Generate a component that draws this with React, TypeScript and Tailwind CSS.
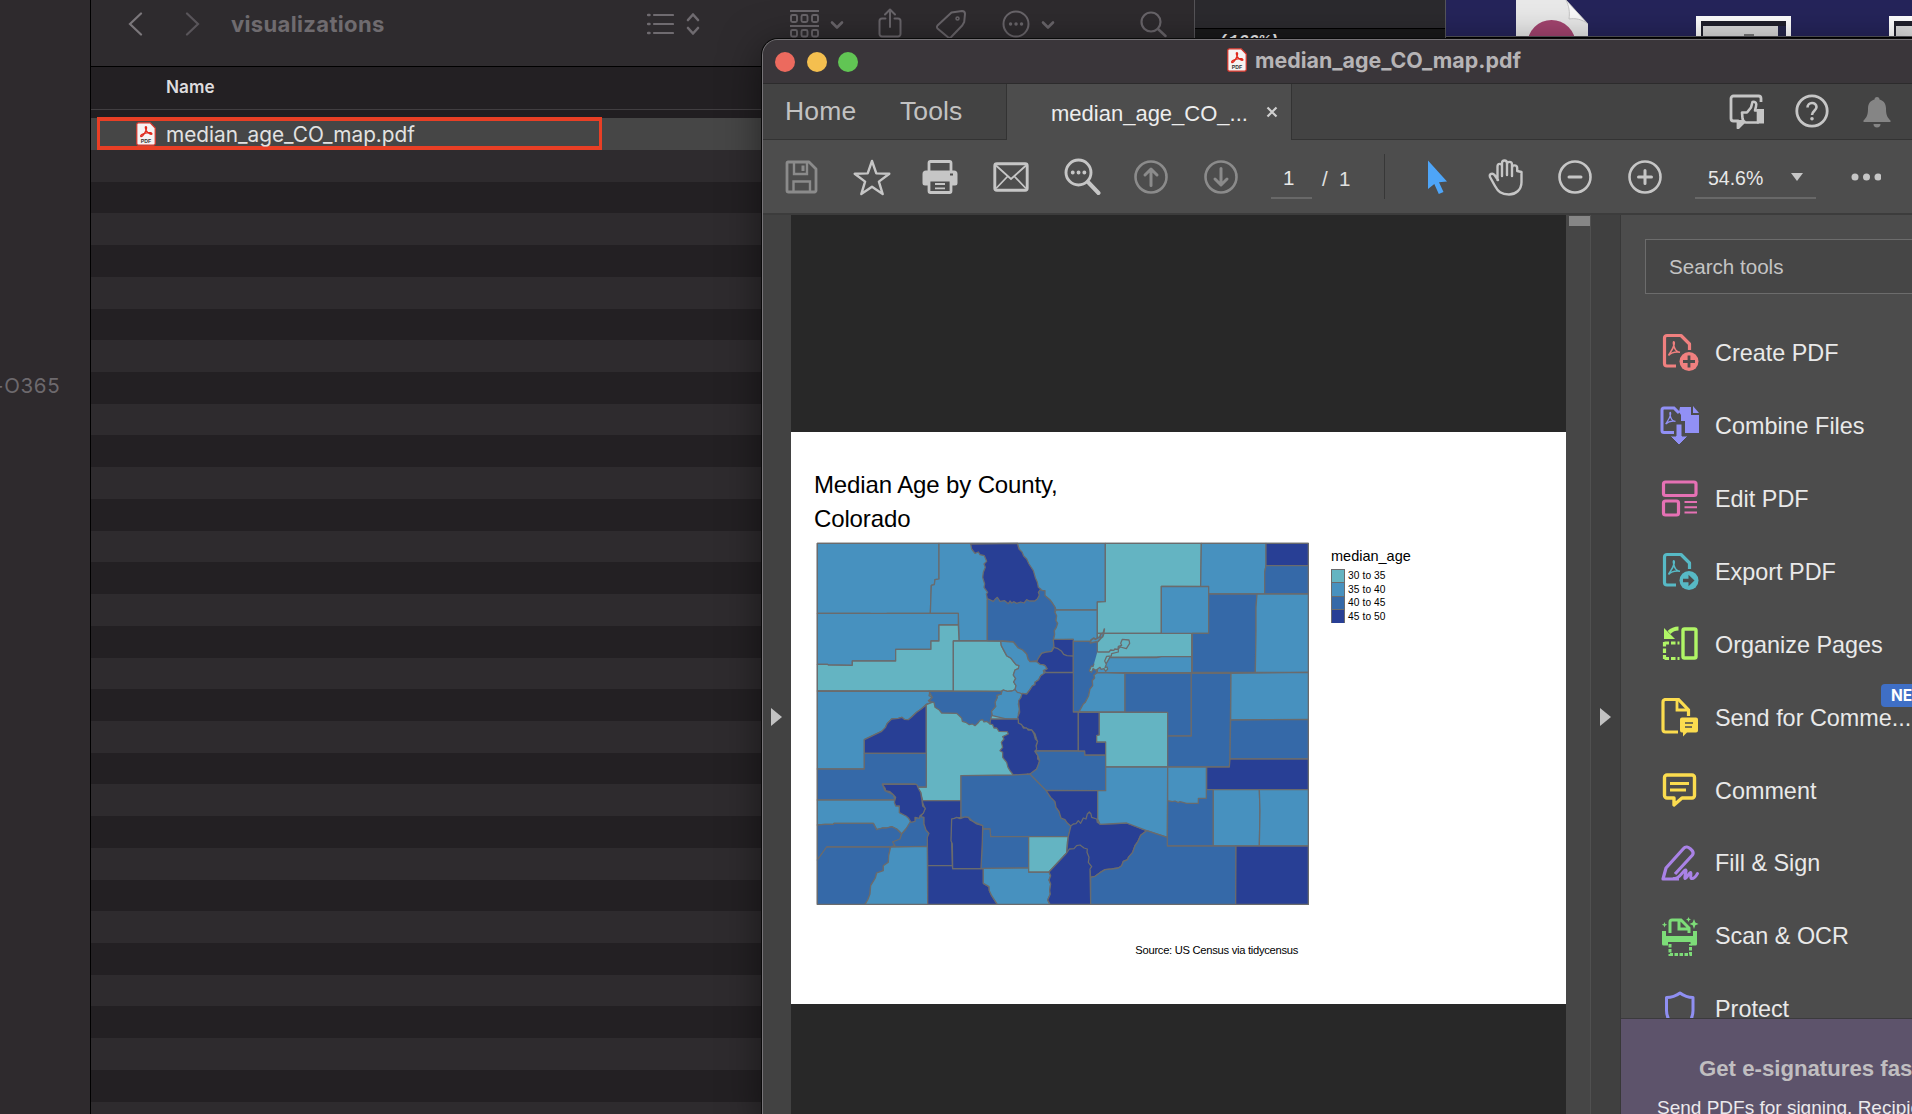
import React from "react";

const A = "#64b4c2";
const B = "#4791bf";
const C = "#3569a8";
const D = "#283f95";

const counties: [string, string, string][] = [
  ["Moffat", B, "52,308 417,308 417,415 405,417 403,432 394,434 391,518 262,518 255,520 215,520 210,518 52,518"],
  ["Routt", B, "417,308 652,308 562,478 562,600 477,600 475,518 391,518 394,434 403,432 405,417 417,415"],
  ["Rio Blanco", B, "52,518 475,518 475,553 417,553 417,601 393,601 393,626 287,626 287,661 157,661 157,674 85,673 83,671 52,671"],
  ["Garfield", A, "52,671 83,671 85,673 157,674 157,661 287,661 287,626 393,626 393,601 417,601 417,553 475,553 477,600 460,601 460,751 52,751"],
  ["Larimer", B, "652,308 916,308 916,483 892,484 892,508 768,508 765,500 750,478 735,465 700,470"],
  ["Eagle", A, "460,601 602,601 604,615 613,632 620,645 633,653 640,662 648,672 657,675 655,684 645,688 640,703 647,714 641,724 648,735 645,747 636,751 622,752 610,748 604,752 460,751"],
  ["Grand", C, "562,470 722,447 728,450 735,450 735,465 750,478 757,487 765,500 765,515 770,525 768,540 773,548 769,560 763,570 764,582 760,598 762,615 755,632 735,635 725,638 720,645 712,660 690,663 684,655 680,640 668,628 655,622 640,604 602,601 562,600"],
  ["Jackson", D, "512,310 652,308 657,325 666,334 671,346 680,355 687,370 700,390 706,411 712,425 715,440 722,445 715,455 718,463 712,475 704,481 688,481 680,477 672,487 662,484 650,488 641,483 635,487 630,481 625,489 614,480 600,482 592,470 587,474 580,482 562,474 559,460 563,455 552,440 554,430 548,410 550,395 556,380 552,370 560,362 553,345 540,342 535,334 525,338 515,325"],
  ["Boulder", B, "768,508 892,508 892,602 820,602 820,596 760,598 764,582 763,570 769,560 773,548 768,540 770,525 765,515"],
  ["Clear Creek", D, "760,596 820,596 820,695 738,695 730,690 741,684 735,675 728,672 720,671 710,665 714,655 725,638 735,635 755,632 762,620"],
  ["Summit", B, "602,601 640,604 655,622 668,628 680,640 684,655 690,663 710,663 720,671 728,672 735,675 741,684 730,690 733,700 722,705 716,717 705,725 705,732 697,736 690,747 680,760 666,760 650,755 645,747 648,735 641,724 647,714 640,703 645,688 655,684 657,675 648,672 640,662 633,653 620,645 604,615"],
  ["Jefferson", C, "820,602 892,602 895,640 892,680 888,700 882,703 884,712 877,720 878,735 870,745 866,765 856,785 850,790 837,814 820,814"],
  ["Lake", B, "605,752 610,748 622,752 636,751 645,747 652,755 660,757 666,760 662,775 655,790 659,805 655,820 657,835 572,835 576,822 574,812 587,797 585,785 592,770 590,764 604,760"],
  ["Park", D, "735,696 820,696 820,814 835,814 835,931 705,931 712,902 705,880 695,868 675,862 655,847 653,830 659,815 656,780 663,770 666,758 680,760 690,747 697,736 705,732 705,725 716,717 722,705"],
  ["Mesa", B, "52,751 390,752 387,765 397,770 385,780 397,785 380,790 365,804 350,815 335,829 325,837 313,836 305,830 295,833 275,835 262,848 256,861 245,872 193,897 193,985 52,985"],
  ["Delta", D, "193,897 245,872 256,861 262,848 275,835 295,833 305,830 313,836 325,837 335,829 350,815 365,804 379,792 379,938 193,938"],
  ["Gunnison", A, "379,792 402,783 640,840 640,1004 483,1005 483,1080 368,1080 362,1055 352,1039 379,1039"],
  ["Pitkin", C, "387,752 605,752 604,760 590,764 592,770 585,785 587,797 574,812 576,822 572,835 570,850 560,842 552,844 548,837 540,839 533,848 525,855 517,850 508,852 497,845 487,842 485,832 470,818 425,817 418,808 405,800 402,785 387,782 397,770"],
  ["Chaffee", D, "572,835 655,835 655,847 665,852 670,862 680,862 684,868 695,868 702,880 706,895 713,902 708,915 710,925 705,933 713,944 713,955 719,960 715,975 710,985 700,993 690,1003 683,1000 676,1004 660,1005 640,1003 630,990 624,980 620,965 608,950 608,935 600,930 608,920 604,905 612,895 608,888 625,880 622,873 597,872 590,862 582,862 578,852 570,850"],
  ["Montrose", C, "52,985 193,985 193,938 379,938 379,1039 352,1039 345,1030 247,1030 255,1050 280,1062 285,1078 52,1078"],
  ["San Miguel", B, "52,1078 285,1078 298,1098 325,1120 345,1135 335,1148 318,1165 305,1180 296,1170 290,1165 275,1158 260,1162 247,1162 230,1167 220,1148 102,1148 100,1151 75,1151 52,1153"],
  ["Dolores", C, "52,1153 75,1151 100,1151 102,1148 220,1148 230,1167 247,1162 260,1162 275,1158 290,1165 305,1180 300,1195 290,1200 278,1204 285,1215 272,1219 80,1219 52,1258"],
  ["San Juan", C, "330,1145 345,1138 352,1128 362,1120 372,1130 372,1150 378,1168 387,1178 384,1190 382,1217 272,1219 285,1215 278,1204 300,1195 305,1180 318,1165"],
  ["Hinsdale", D, "366,1080 483,1080 483,1130 455,1135 455,1205 457,1276 383,1275 382,1190 387,1178 378,1168 372,1150 372,1130 362,1128 368,1118 375,1105"],
  ["Ouray", D, "247,1031 350,1031 356,1045 362,1055 366,1080 368,1096 376,1103 370,1118 360,1125 358,1133 345,1130 345,1142 333,1145 326,1133 318,1126 298,1116 298,1096 287,1096 283,1085 287,1070 280,1062 270,1053 257,1050 255,1042"],
  ["Montezuma", C, "52,1258 80,1219 272,1219 266,1245 265,1265 250,1275 250,1290 230,1297 226,1312 212,1335 210,1360 203,1378 195,1391 52,1391"],
  ["La Plata", B, "272,1219 382,1217 383,1391 195,1391 203,1378 210,1360 212,1335 226,1312 230,1297 250,1290 250,1275 265,1265 266,1245"],
  ["Archuleta", D, "383,1275 457,1275 458,1284 550,1284 550,1328 567,1338 568,1350 575,1365 592,1391 383,1391"],
  ["Saguache", C, "483,1005 640,1003 690,1000 738,1048 752,1070 765,1083 768,1100 777,1112 783,1132 795,1137 802,1147 813,1155 805,1188 572,1188 570,1165 548,1165 548,1155 520,1143 505,1130 483,1130"],
  ["Rio Grande", C, "548,1165 570,1165 572,1188 686,1188 686,1282 543,1284 547,1200"],
  ["Mineral", D, "455,1135 463,1133 470,1130 480,1134 495,1129 505,1130 510,1138 520,1143 530,1150 548,1155 547,1200 543,1284 458,1284 457,1210 453,1200"],
  ["Conejos", B, "550,1283 686,1282 686,1294 747,1294 752,1305 747,1318 752,1330 749,1350 751,1360 743,1378 750,1391 592,1391 575,1365 568,1350 567,1338 550,1328"],
  ["Alamosa", A, "686,1188 805,1188 802,1205 800,1237 747,1294 686,1294"],
  ["Fremont", C, "705,931 854,931 854,943 917,943 917,1050 738,1049 690,1000 710,985 719,960 713,944"],
  ["Custer", D, "738,1049 893,1050 893,1140 868,1160 813,1157 802,1147 795,1137 783,1132 777,1112 768,1100 765,1083 752,1070"],
  ["Huerfano", D, "813,1155 820,1150 828,1149 835,1140 842,1148 850,1132 858,1135 862,1120 868,1114 873,1120 875,1130 890,1135 892,1145 900,1150 980,1147 1040,1170 1022,1184 1014,1202 1005,1215 998,1235 985,1250 983,1257 970,1262 965,1275 955,1282 935,1285 915,1287 900,1296 885,1307 872,1310 870,1290 800,1237 805,1188"],
  ["Costilla", D, "747,1294 800,1237 808,1225 822,1224 830,1215 840,1213 852,1222 862,1225 861,1235 867,1250 865,1265 875,1278 870,1285 872,1391 750,1391 743,1378 751,1360 749,1350 752,1330 747,1318 752,1305"],
  ["Weld", A, "916,308 1204,308 1202,437 1084,437 1084,578 892,578 892,484 916,483"],
  ["Adams", A, "892,578 1175,578 1175,648 930,650 920,672 892,680"],
  ["Arapahoe", B, "892,680 915,675 930,650 1070,651 1085,648 1175,648 1175,696 892,696"],
  ["Douglas", B, "892,696 975,698 975,814 837,814 850,790 856,785 866,765 870,745 878,735 877,720 884,712 882,703"],
  ["Teller", D, "835,814 898,815 898,883 890,885 890,904 917,904 917,943 855,943 854,931 835,931"],
  ["El Paso", A, "898,815 1103,815 1103,979 917,979 917,904 890,904 890,885 898,883"],
  ["Morgan", B, "1084,437 1226,438 1226,578 1084,578"],
  ["Logan", B, "1204,308 1398,308 1398,375 1394,395 1394,460 1226,460 1226,437 1202,437"],
  ["Sedgwick", D, "1398,308 1525,308 1525,375 1398,375"],
  ["Phillips", C, "1398,375 1525,375 1525,460 1394,460 1394,395"],
  ["Washington", C, "1226,460 1371,460 1368,500 1368,570 1366,695 1177,695 1177,578 1226,578"],
  ["Yuma", B, "1371,460 1525,460 1525,695 1366,695 1368,570 1368,500"],
  ["Elbert", C, "975,698 1174,698 1174,886 1103,886 1103,815 975,814"],
  ["Lincoln", C, "1174,698 1293,698 1291,840 1290,955 1288,979 1103,979 1103,886 1174,886"],
  ["Kit Carson", B, "1293,698 1525,695 1525,836 1292,838"],
  ["Cheyenne", C, "1292,838 1525,836 1525,954 1290,955"],
  ["Kiowa", D, "1290,955 1525,955 1525,1047 1220,1047 1220,979 1288,979"],
  ["Pueblo", B, "917,979 1103,979 1102,1190 1040,1170 980,1147 900,1151 893,1135 893,1050 917,1050"],
  ["Otero", C, "1103,1080 1219,1047 1240,1047 1240,1216 1102,1216"],
  ["Crowley", B, "1103,979 1219,979 1219,1073 1195,1073 1195,1088 1160,1088 1140,1083 1135,1086 1125,1081 1117,1083 1103,1080"],
  ["Bent", B, "1240,1047 1378,1047 1380,1110 1378,1216 1240,1216"],
  ["Prowers", B, "1378,1047 1525,1047 1525,1216 1378,1216 1380,1110"],
  ["Las Animas", C, "1040,1170 1102,1190 1102,1216 1308,1216 1307,1391 872,1391 872,1310 885,1307 900,1296 915,1287 935,1285 955,1282 965,1275 970,1262 983,1257 985,1250 998,1235 1005,1215 1014,1202 1022,1184"],
  ["Baca", D, "1308,1216 1525,1216 1525,1391 1307,1391"],
];

const CountyMap = () => (
  <svg className="block h-[364px] w-[494px]" viewBox="48 304 1482 1092">
    <g stroke="#6a6b6d" strokeWidth="3.8" strokeLinejoin="round">
      <rect x="52" y="308" width="1473" height="1083" fill={B} />
      {counties.map(([name, fill, points]) => (
        <polygon key={name} fill={fill} points={points} />
      ))}
      <g fill="none">
        <path d="M762 620l12 4 11 8 6 9 10 4 19 1" />
        <path fill={B} strokeWidth="5" d="M913 565l-3 12-8 3-2 8-14 8-4-4-9 6-2 9 14-3 10-2 8-10 5-4 3-9z" />
        <path fill={A} d="M892 634h35l5-6 10 1 2-4 10 1 1-9 10-3-3-6 5-12 20 2 2 10-10 16-18-5-6 5v10l-20 5-1 7-14 1-6 14 5 10-4 10 6-2 2 6-6 7-5-8-9 2-3-6-12 9-9-5-4 11-7-4 6-15 5 2 3-9" />
      </g>
    </g>
  </svg>
);

const PdfFileIcon = ({ className }: { className: string }) => (
  <svg className={className} viewBox="0 0 20 24">
    <path d="M2.5.8h11.7L19.2 6v15.5a1.7 1.7 0 0 1-1.7 1.7h-15a1.7 1.7 0 0 1-1.7-1.7v-19A1.7 1.7 0 0 1 2.5.8z" fill="#f6f3f3" stroke="#d8362b" strokeWidth="1.2" />
    <path d="M4.7 14.2c-.8-1 3-3 6-3.4 3-.5 5.500 0 5.200 1.100-.5 1.200-4-.5-5.600-3.300C9.200 6.500 9 4.500 10 4.600c1.300.2.200 4-1.500 6.700-1.300 2.200-3 3.800-3.800 2.900z" fill="none" stroke="#e0291d" strokeWidth="1.300" />
    <text x="10" y="21" fontSize="5.200" fontWeight="700" textAnchor="middle" fill="#333" className="font-['Liberation_Sans']">PDF</text>
  </svg>
);

const S = ({ w, h, className = "", children }: { w: number; h: number; className?: string; children: React.ReactNode }) => (
  <svg width={w} height={h} viewBox={`0 0 ${w} ${h}`} fill="none" stroke="currentColor" className={`shrink-0 ${className}`}>
    {children}
  </svg>
);

const FinderToolbar = () => (
  <div className="flex h-[66px] shrink-0 items-start text-[#69656a]">
    <S w={16} h={24} className="mt-3 ml-[36px] text-[#7b777b]"><path d="M14 1.500L3 12l11 10.500" strokeWidth="2.200" strokeLinecap="round" /></S>
    <S w={16} h={24} className="mt-3 ml-[42px] text-[#59555a]"><path d="M2 1.500L13 12 2 22.500" strokeWidth="2.200" strokeLinecap="round" /></S>
    <div className="mt-[8px] ml-[30px] w-[416px] font-[Inter] text-[22px] leading-[32px] font-bold tracking-[0.35px] text-[#6f6b6f]">visualizations</div>
    <S w={27} h={22} className="mt-[13px] text-[#6f6b70]">
      <path d="M7 2h19M7 11h19M7 20h19" strokeWidth="2.200" strokeLinecap="round" />
      <path d="M1 2h1.500M1 11h1.500M1 20h1.500" strokeWidth="2.500" strokeLinecap="round" />
    </S>
    <S w={14} h={24} className="mt-3 ml-[12px] text-[#6f6b70]"><path d="M2 8l5-5.500L12 8M2 16l5 5.500 5-5.500" strokeWidth="2.600" strokeLinecap="round" strokeLinejoin="round" /></S>
    <S w={31} h={29} className="mt-[9px] ml-[89px]">
      <path d="M1 2h29M1 17h29" strokeWidth="1.800" />
      <rect x="2" y="6" width="6" height="7" rx="1.500" strokeWidth="1.900" /><rect x="12.500" y="6" width="6" height="7" rx="1.500" strokeWidth="1.900" /><rect x="23" y="6" width="6" height="7" rx="1.500" strokeWidth="1.900" />
      <rect x="2" y="21" width="6" height="6.500" rx="1.500" strokeWidth="1.900" /><rect x="12.500" y="21" width="6" height="6.500" rx="1.500" strokeWidth="1.900" /><rect x="23" y="21" width="6" height="6.500" rx="1.500" strokeWidth="1.900" />
    </S>
    <S w={14} h={10} className="mt-5 ml-[10px]"><path d="M2 2.500l5 5 5-5" strokeWidth="2.600" strokeLinecap="round" strokeLinejoin="round" /></S>
    <S w={24} h={31} className="mt-2 ml-[34px]"><path d="M7.500 10.500H4a2.500 2.500 0 0 0-2.500 2.500v13A2.500 2.500 0 0 0 4 28.500h16a2.500 2.500 0 0 0 2.500-2.500V13a2.500 2.500 0 0 0-2.500-2.500h-3.500M12 19V2M7 6.500L12 1.500l5 5" strokeWidth="2" strokeLinecap="round" strokeLinejoin="round" /></S>
    <S w={32} h={30} className="mt-[9px] ml-[33px]"><path d="M16.500 3.500L27 2a3 3 0 0 1 3 3l-.8 8-2 3.500-11 11.500a2.500 2.500 0 0 1-3.500 0L2.500 19.500a2.500 2.500 0 0 1 0-3z" strokeWidth="2" strokeLinejoin="round" /><circle cx="22.500" cy="9.500" r="1.500" strokeWidth="1.500" /></S>
    <S w={28} h={28} className="mt-[10px] ml-[35px]"><circle cx="14" cy="14" r="12.500" strokeWidth="2" /><path d="M8.500 14h.1M14 14h.1M19.500 14h.1" strokeWidth="3.400" strokeLinecap="round" /></S>
    <S w={14} h={10} className="mt-5 ml-[11px]"><path d="M2 2.500l5 5 5-5" strokeWidth="2.600" strokeLinecap="round" strokeLinejoin="round" /></S>
    <S w={27} h={27} className="mt-[11px] ml-[85px]"><circle cx="11" cy="11" r="9.500" strokeWidth="2.200" /><path d="M18 18l7.500 7" strokeWidth="2.500" strokeLinecap="round" /></S>
  </div>
);

const Finder = () => (
  <div className="absolute top-0 left-0 flex h-[1114px] w-[1195px] overflow-hidden border-r border-[#565458] bg-[#2e2b2e]">
    <div className="h-full w-[90px] shrink-0 overflow-hidden bg-[#2e2a2d] pt-[371px] font-[Inter] text-[20.500px] leading-[30px] tracking-[0.7px] text-[#6d696d]">
      <span className="-ml-[6px] whitespace-nowrap">-O365</span>
    </div>
    <div className="flex w-[1105px] shrink-0 flex-col border-l-[1.500px] border-black">
      <FinderToolbar />
      <div className="h-[44px] shrink-0 border-t border-b border-t-black border-b-[#413e41] bg-[#232023] pl-[75px] font-[Inter] text-[17.200px] leading-[40px] font-semibold text-[#dedcde]">Name</div>
      <div className="h-[8px] shrink-0 bg-[#211e21]" />
      <div className="flex h-[32px] shrink-0 bg-[#464646]">
        <div className="-mt-px ml-[6px] flex h-[33px] w-[505px] items-center border-x-[3px] border-y-[4px] border-[#e93f25] pl-[36px]">
          <PdfFileIcon className="h-[24px] w-[20px]" />
          <span className="ml-[10px] pt-[2px] font-[Inter] text-[20.800px] leading-[24px] text-[#e2e2e2]">median_age_CO_map.pdf</span>
        </div>
      </div>
      {Array.from({ length: 31 }, (_, i) => (
        <div key={i} className={i % 2 ? "h-[31.72px] shrink-0 bg-[#232023]" : "h-[31.72px] shrink-0 bg-[#2e2b2e]"} />
      ))}
    </div>
  </div>
);

const Thumb = () => (
  <div className="h-[40px] w-[95px] shrink-0 border-[5px] border-white bg-[#d9d9d9]">
    <div className="h-[5px] bg-[#20202c]" />
    <div className="flex h-[20px] justify-end gap-1 border-l-2 border-[#20202c]">
      <div className="mt-2 mr-5 h-[4px] w-[10px] bg-[#777]" />
      <div className="h-full w-[8px] bg-[#25264a]" />
    </div>
  </div>
);

const Desktop = () => (
  <div className="absolute top-0 left-[1195px] flex h-[60px] w-[717px] bg-black">
    <div className="w-[251px] shrink-0 border-r border-[#55555a] bg-[#19191a]">
      <div className="h-[29px] border-b border-black bg-[#2b2a2e]" />
      <div className="pl-[23px] font-['Liberation_Mono'] text-[17px] font-bold text-[#f2f2f2] italic">(100%)</div>
    </div>
    <div className="flex h-[37px] w-[466px] overflow-hidden border-b border-[#55555a] bg-[#25245a] pl-[70px]">
      <svg className="h-[36px] w-[72px] shrink-0" viewBox="0 0 72 36">
        <path d="M0 0h50l22 24v12H0z" fill="#e9e9e9" />
        <path d="M50 0l22 24c-6-5-13-6-19-5 1-7 0-13-3-19z" fill="#fafafa" stroke="#bbb" strokeWidth=".8" />
        <circle cx="35.500" cy="44" r="24" fill="#a3446f" />
      </svg>
      <div className="mt-4 ml-[108px] flex gap-[98px]"><Thumb /><Thumb /></div>
    </div>
  </div>
);

const TabBar = () => (
  <div className="flex h-[57px] shrink-0 border-t-[1.500px] border-[#2c2b2c] bg-[#434343] font-['Liberation_Sans']">
    <div className="flex w-[244px] items-center border-r border-b border-[#333] pl-[22px] text-[26.500px] text-[#c2c2c2]">
      <span className="w-[115px] tracking-[0.2px]">Home</span>
      <span className="tracking-[0.1px]">Tools</span>
    </div>
    <div className="flex w-[284px] items-center bg-[#4d4d4d] pl-[44px] text-[22px] text-[#ededed]">
      <span className="relative top-px w-[215px]">median_age_CO_...</span>
      <S w={12} h={12} className="text-[#cfcfcf]"><path d="M1.500 1.500l9 9M10.500 1.500l-9 9" strokeWidth="2.200" /></S>
    </div>
    <div className="flex flex-1 items-center border-b border-l border-[#333] pl-[436px] text-[#c6c6c6]">
      <S w={37} h={37} className="-mt-0.5 mr-[30px]">
        <path d="M33 10V6.500A2.500 2.500 0 0 0 30.500 4h-25A2.500 2.500 0 0 0 3 6.500v20A2.500 2.500 0 0 0 5.500 29H10v7l7-7" strokeWidth="2.800" strokeLinejoin="round" />
        <path d="M9 28h8l-7 8z" fill="currentColor" stroke="none" />
        <path d="M14 20.500h5l4-5 1.500-5.500c3-1 4.500 1.500 3.500 4.500l-1 4h3v12H18c-2 0-3-1-3.500-4z" fill="#434343" strokeWidth="2.600" strokeLinejoin="round" />
        <path d="M29 17h7v14.500h-7z" fill="currentColor" stroke="none" />
      </S>
      <S w={34} h={34} className="-mt-0.5 mr-[34px]">
        <circle cx="17" cy="17" r="15.200" strokeWidth="2.800" />
        <path d="M12.500 13.500c0-6 9-6 9-.5 0 3.500-4.500 4-4.500 8" strokeWidth="2.600" />
        <circle cx="17" cy="24.800" r="1.800" fill="currentColor" stroke="none" />
      </S>
      <S w={28} h={32} className="text-[#858585]">
        <path d="M14 1a2.500 2.500 0 0 1 2.500 2.500c4 1 6.500 4 6.500 9 0 7 1.500 9 4.500 12V26H.5v-1.500c3-3 4.500-5 4.500-12 0-5 2.500-8 6.500-9A2.500 2.500 0 0 1 14 1zM10.500 28h7a3.500 3.500 0 0 1-7 0z" fill="currentColor" stroke="none" />
      </S>
    </div>
  </div>
);

const CircleIcon = ({ d, className }: { d: string; className: string }) => (
  <S w={34} h={34} className={className}>
    <circle cx="17" cy="17" r="15.500" strokeWidth="2.600" />
    <path d={d} strokeWidth="3" strokeLinecap="round" strokeLinejoin="round" />
  </S>
);

const ToolBar = () => (
  <div className="flex h-[75px] shrink-0 items-center border-b-2 border-[#3c3c3c] bg-[#4d4d4d] pl-[22px] font-['Liberation_Sans'] text-[#c6c6c6]">
    <S w={34} h={34} className="text-[#8b8b8b]">
      <path d="M3 2h21l7 7v21.500a1.500 1.500 0 0 1-1.500 1.500h-26A1.500 1.500 0 0 1 2 30.500V3a1 1 0 0 1 1-1z" strokeWidth="2.800" strokeLinejoin="round" />
      <path d="M9 2.500v11.500h13V2.500M8.500 31.500V21.500h16.500v10" strokeWidth="2.400" /><path d="M18 5.500v5.500" strokeWidth="3" />
    </S>
    <S w={40} h={38} className="ml-[33px]"><path d="M20 3l4.300 12.400 13 .3-10.400 7.900 3.800 12.500L20 28.700 9.300 36.100l3.800-12.500L2.700 15.700l13-.3z" strokeWidth="2.400" strokeLinejoin="round" /></S>
    <S w={36} h={36} className="ml-[30px]">
      <path d="M7 12V4a1.500 1.500 0 0 1 1.500-1.500h19A1.500 1.500 0 0 1 29 4v8" strokeWidth="2.800" />
      <path d="M4 11.500h28a3.500 3.500 0 0 1 3.500 3.500v9a2.500 2.500 0 0 1-2.500 2.500h-3V21H6v5.500H3A2.500 2.500 0 0 1 .5 24v-9A3.500 3.500 0 0 1 4 11.500z" fill="currentColor" stroke="none" />
      <rect x="7" y="21" width="22" height="12.500" rx="1.500" strokeWidth="2.800" /><path d="M13 25h10M13 29.300h10" strokeWidth="1.800" /><path d="M28 15.500h3" stroke="#4d4d4d" strokeWidth="2" />
    </S>
    <S w={36} h={30} className="ml-[35px]"><rect x="1.800" y="1.800" width="32.400" height="26.400" rx="2" strokeWidth="2.900" /><path d="M3 3.500l15 13.500 15-13.500M3 26.500l11.500-12M33 26.500l-11.500-12" strokeWidth="1.800" /></S>
    <S w={37} h={37} className="ml-[35px]"><circle cx="14.500" cy="14.500" r="12.500" strokeWidth="2.900" /><path d="M24 24l10.500 11" strokeWidth="4" strokeLinecap="round" /><path d="M8.700 14.500h.1M14.500 14.500h.1M20.300 14.500h.1" strokeWidth="3.800" strokeLinecap="round" /></S>
    <CircleIcon className="ml-[33px] text-[#8b8b8b]" d="M17 25.500V9.500M11 15l6-6 6 6" />
    <CircleIcon className="ml-[36px] text-[#8b8b8b]" d="M17 8.500v16M11 19l6 6 6-6" />
    <div className="mt-[-1px] ml-[33px] h-[45px] w-[41px] border-b-2 border-[#686868] pt-[7px] pl-[12px] text-[20.500px] leading-[34px] text-[#e8e8e8]">1</div>
    <div className="mt-[4px] ml-[10px] w-[62px] text-[20.500px] leading-[34px] whitespace-pre text-[#e0e0e0]">/&nbsp; 1</div>
    <div className="h-[45px] w-px bg-[#373737]" />
    <S w={22} h={36} className="ml-[42px] text-[#4ea5f8]"><path d="M1 1.500l19 21-8 .8 4.500 9.700-4.700 2-4.500-10L1 30z" fill="currentColor" stroke="none" /></S>
    <S w={38} h={38} className="ml-[38px]">
      <path d="M10.500 22V8.500c0-3.500 4.500-3.500 4.500 0V18M15 17V5.500c0-4 5-4 5 0V17M20 17V6.500c0-3.500 5-3.500 5 0V18M25 18v-8c0-3.500 5-3.500 5.200 0V13l4.300 1V24c0 8-6 12.500-12.500 12.500-8 0-11-3-14-8.500l-5-9c-1-3 2.500-4.500 4.500-2l3.500 5" strokeWidth="2.400" strokeLinejoin="round" strokeLinecap="round" />
    </S>
    <CircleIcon className="ml-[33px]" d="M11 17h12" />
    <CircleIcon className="ml-[36px]" d="M10.500 17h13M17 10.500v13" />
    <div className="mt-[-1px] ml-[33px] flex h-[45px] w-[121px] border-b-2 border-[#686868] pt-[7px] pl-[13px] text-[19.500px] leading-[34px] text-[#e8e8e8]">
      <span className="w-[83px]">54.6%</span>
      <S w={12} h={8} className="mt-[12px]"><path d="M0 0h12L6 8z" fill="#c6c6c6" stroke="none" /></S>
    </div>
    <S w={30} h={8} className="ml-[35px]"><circle cx="4" cy="4" r="3.500" fill="currentColor" stroke="none" /><circle cx="15.500" cy="4" r="3.500" fill="currentColor" stroke="none" /><circle cx="27" cy="4" r="3.500" fill="currentColor" stroke="none" /></S>
  </div>
);

const acro = "M8.500 22.500c1.200-3 4.300-5.500 5.500-10.500.4-2 .3-3.300-.2-3.300-.7 0-.4 3.300.8 6.300 1 2.500 3 4.300 5.400 4.300M8.500 22.500c2.500-2.500 6.500-4 11.500-3.200";
const docPath = "M16 33H7a2.500 2.500 0 0 1-2.500-2.500V5A2.500 2.500 0 0 1 7 2.500h14l8.500 8.500v6";

const tools: { label: string; color: string; icon: React.ReactNode }[] = [
  { label: "Create PDF", color: "text-[#f0807f]", icon: <><path d={docPath} strokeWidth="3.200" strokeLinejoin="round" /><path d={acro} strokeWidth="1.600" /><circle cx="29" cy="28.500" r="9.500" fill="currentColor" stroke="none" /><path d="M29 22.500v12M23 28.500h12" stroke="#4c4c4c" strokeWidth="2.800" /></> },
  { label: "Combine Files", color: "text-[#9190f5]", icon: <><path d="M14 26.500H4A2 2 0 0 1 2 24.500V4A2 2 0 0 1 4 2h10l5 5" strokeWidth="3" /><path d={acro} strokeWidth="1.500" transform="translate(-1.500 -1) scale(.85)" /><path d="M20 1h11v8h8v18H25V15h-4V9l-2-3z" fill="currentColor" stroke="none" /><path d="M33 0l6 7h-6z" fill="currentColor" stroke="none" /><path d="M16 18h6v12h6l-9 9-9-9h6z" fill="currentColor" stroke="#4c4c4c" strokeWidth="1" /></> },
  { label: "Edit PDF", color: "text-[#e571b4]", icon: <><rect x="3.500" y="3" width="32.500" height="13.500" rx="2" strokeWidth="3.200" /><rect x="3.500" y="22" width="15" height="14" rx="2" strokeWidth="3.200" /><path d="M24.500 23h12.500M24.500 28.300h12.500M24.500 33.500h12.500" strokeWidth="2" /></> },
  { label: "Export PDF", color: "text-[#57b9c5]", icon: <><path d={docPath} strokeWidth="3.200" strokeLinejoin="round" /><path d={acro} strokeWidth="1.600" /><circle cx="29" cy="28.500" r="9.500" fill="currentColor" stroke="none" /><path d="M23 26.800h5.500v-4l6 5.700-6 5.700v-4H23z" fill="#4c4c4c" stroke="none" /></> },
  { label: "Organize Pages", color: "text-[#b0f566]", icon: <><rect x="23" y="4" width="13" height="29" rx="1.500" strokeWidth="3.400" /><path d="M4.500 17v17M4.500 18h15M4.500 33.500h15" strokeWidth="3.200" strokeDasharray="4.500 2" /><path d="M18.500 3.500c-5 0-7.500 2-9.500 4" strokeWidth="4" /><path d="M4 3v11h11z" fill="currentColor" stroke="none" /></> },
  { label: "Send for Comme...", color: "text-[#fbdc4f]", icon: <><path d="M18 34H5.500A2.500 2.500 0 0 1 3 31.500V4A2.500 2.500 0 0 1 5.500 1.500h13L28.500 12v6" strokeWidth="3.200" /><path d="M17 1.500V12h11.500" strokeWidth="2.800" /><path d="M22 19.500h14a2 2 0 0 1 2 2v11a2 2 0 0 1-2 2H27l-4 4v-4h-1a2 2 0 0 1-2-2v-11a2 2 0 0 1 2-2z" fill="currentColor" stroke="none" /><path d="M25 25h8M25 29h7" stroke="#4c4c4c" strokeWidth="1.700" /></> },
  { label: "Comment", color: "text-[#fbdc4f]", icon: <><path d="M7 4h25a2.500 2.500 0 0 1 2.500 2.500v18A2.500 2.500 0 0 1 32 27H22l-8 7v-7H7a2.500 2.500 0 0 1-2.500-2.500v-18A2.500 2.500 0 0 1 7 4z" strokeWidth="3.400" strokeLinejoin="round" /><path d="M10 12.500h19M10 19h16" strokeWidth="2.800" /></> },
  { label: "Fill & Sign", color: "text-[#a982e6]", icon: <><path d="M19 35H3l3-11L24 4c3-3.500 11 3 8.500 7L15 30" strokeWidth="3.200" strokeLinejoin="round" /><path d="M14 34.500c5 1 9-7.500 11.500-8.500 2 0-2 8-.5 8.500s4-6 5.500-6c1.500.5-1 5.500 1 6s4-1.500 6-5" strokeWidth="3" strokeLinecap="round" /></> },
  { label: "Scan & OCR", color: "text-[#7ddc78]", icon: <><path d="M10 16V5a2 2 0 0 1 2-2h9l8 8v5M19 3v9h9" strokeWidth="3" /><path d="M2 14h4v5h27v-5h4v13a1.500 1.500 0 0 1-1.500 1.500h-5V25H8v3.500H3.500A1.500 1.500 0 0 1 2 27z" fill="currentColor" stroke="none" /><path d="M10 27v10.500h20.500V27" strokeWidth="3" strokeDasharray="3.500 1.500" /><path d="M34 2l1.300 3.500L38.500 7l-3.200 1.300L34 12l-1.300-3.700L29.500 7l3.200-1.500zM4.500 5l.8 2 2 .8-2 .8-.8 2-.8-2-2-.8 2-.8zM28.500 0l.8 1.700 1.700.8-1.700.8-.8 1.700-.8-1.700-1.700-.8 1.700-.8z" fill="currentColor" stroke="none" /></> },
  { label: "Protect", color: "text-[#8f8ff2]", icon: <path d="M20 3c4 3 8 4.500 13 4.500v13C33 30 28 35 20 38 12 35 6.500 30 6.500 20.500v-13C12 7.500 16 6 20 3z" strokeWidth="3" strokeLinejoin="round" /> },
];

const ToolsPanel = () => (
  <div className="flex w-[292px] shrink-0 flex-col overflow-hidden border-l border-[#383838] bg-[#4c4c4c] font-['Liberation_Sans']">
    <div className="h-[803px] shrink-0 overflow-hidden">
      <div className="mt-[24px] ml-[24px] h-[55px] w-[400px] border border-[#6c6c6c] bg-[#464646] pl-[23px] text-[20.600px] leading-[53px] text-[#c4c4c4]">Search tools</div>
      <div className="mt-[23px]">
        {tools.map((t) => (
          <div key={t.label} className="relative flex h-[72.95px] items-center pl-[39px] whitespace-nowrap">
            <S w={40} h={40} className={t.color}>{t.icon}</S>
            <span className="ml-[15px] text-[23.400px] text-[#e9e9e9]">{t.label}</span>
            {t.label.startsWith("Send") && (
              <span className="absolute top-[2px] left-[260px] h-[23px] rounded-[4px] bg-[#3f6fc6] px-[10px] font-[Inter] text-[15.500px] leading-[24px] font-bold text-white">NEW</span>
            )}
          </div>
        ))}
      </div>
    </div>
    <div className="h-[110px] w-[420px] shrink-0 border-t border-[#3b3a3d] bg-[#5d536b] whitespace-nowrap">
      <div className="mt-[34px] ml-[78px] text-[22.200px] leading-[32px] font-bold text-[#c0bec0]">Get e-signatures fast</div>
      <div className="mt-[7px] ml-[36px] text-[19px] leading-[32px] text-[#ebe9ec]">Send PDFs for signing. Recipients</div>
    </div>
  </div>
);

const legend = [
  { label: "30 to 35", color: "bg-[#64b4c2]" },
  { label: "35 to 40", color: "bg-[#4791bf]" },
  { label: "40 to 45", color: "bg-[#3569a8]" },
  { label: "45 to 50", color: "bg-[#283f95]" },
];

const PdfPage = () => (
  <div className="mt-[217px] h-[572px] w-full bg-white pt-[36px] pl-[23px] font-['Liberation_Sans'] text-black">
    <div className="text-[24px] leading-[34px] tracking-[-0.13px]">Median Age by County,<br />Colorado</div>
    <div className="mt-[5.500px] flex pl-[2px]">
      <CountyMap />
      <div className="ml-[21px] pt-[4px]">
        <div className="text-[14.500px] leading-[20px]">median_age</div>
        <div className="mt-[3px]">
          {legend.map((l) => (
            <div key={l.label} className="flex h-[13.500px] items-center">
              <div className={`h-full w-[14px] border-x border-t border-[#6a6b6d] last:border-b ${l.color}`} />
              <span className="ml-[3px] pt-px text-[10.200px] leading-[11px] tracking-[0.1px]">{l.label}</span>
            </div>
          ))}
        </div>
      </div>
    </div>
    <div className="mt-[34px] w-[484px] text-right text-[11.200px] leading-[20px] tracking-[-0.28px]">Source: US Census via tidycensus</div>
  </div>
);

const Acrobat = () => (
  <div className="absolute top-[39px] left-[762px] flex h-[1080px] w-[1160px] flex-col overflow-hidden rounded-tl-[16px] border-t border-l border-[#767377] bg-[#4d4d4d] shadow-[0_0_0_1px_#0a0a0a,0_8px_40px_rgba(0,0,0,0.5)]">
    <div className="flex h-[43px] shrink-0 items-center bg-[#3a363a] pl-[12px]">
      <div className="flex w-[452px] gap-[11.600px]">
        <div className="size-5 rounded-full bg-[#ec6a5e]" />
        <div className="size-5 rounded-full bg-[#f4bf4f]" />
        <div className="size-5 rounded-full bg-[#61c554]" />
      </div>
      <PdfFileIcon className="-mt-[3px] h-[24px] w-[20px]" />
      <span className="-mt-[3px] ml-[8px] font-[Inter] text-[21.400px] leading-[40px] font-bold text-[#b6b4b6]">median_age_CO_map.pdf</span>
    </div>
    <TabBar />
    <ToolBar />
    <div className="flex h-[903px] w-[1149px] shrink-0">
      <div className="w-[28px] shrink-0 bg-[#424242] pt-[493px] pl-[8px]"><S w={11} h={18}><path d="M0 0l11 9L0 18z" fill="#c2c2c2" stroke="none" /></S></div>
      <div className="w-[775px] shrink-0 bg-[#282828]"><PdfPage /></div>
      <div className="w-[25px] shrink-0 border-r border-[#505050] bg-[#464646]"><div className="mt-px ml-[3px] h-[10px] w-[21px] bg-[#868686]" /></div>
      <div className="w-[29px] shrink-0 bg-[#404040] pt-[493px] pl-[9px]"><S w={11} h={18}><path d="M0 0l11 9L0 18z" fill="#c2c2c2" stroke="none" /></S></div>
      <ToolsPanel />
    </div>
  </div>
);

export default function App() {
  return (
    <div className="relative h-[1114px] w-[1912px] overflow-hidden bg-black">
      <Desktop />
      <Finder />
      <Acrobat />
    </div>
  );
}
